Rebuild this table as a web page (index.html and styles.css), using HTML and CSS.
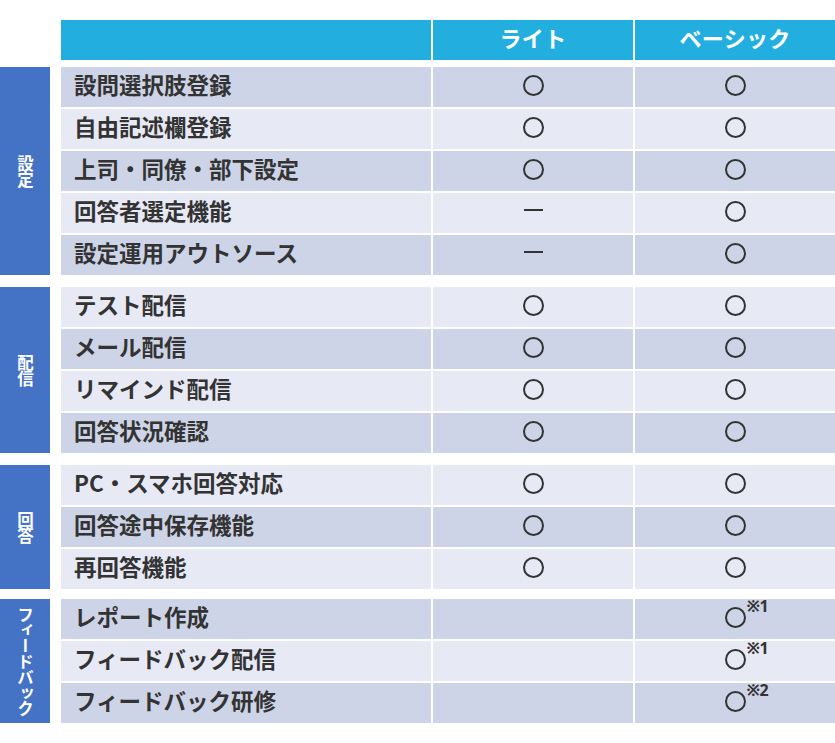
FILE: index.html
```html
<!DOCTYPE html>
<html lang="ja">
<head>
<meta charset="utf-8">
<link rel="stylesheet" href="styles.css">
</head>
<body>
<div class="table">
  <div class="head">
    <div class="head-spacer"></div>
    <div class="head-cells">
      <div class="hcell"></div>
      <div class="hcell">ライト</div>
      <div class="hcell">ベーシック</div>
    </div>
  </div>

  <div class="group">
    <div class="cat"><span>設定</span></div>
    <div class="rows">
      <div class="row dark"><div class="feat">設問選択肢登録</div><div class="val"><i class="o"></i></div><div class="val"><i class="o"></i></div></div>
      <div class="row light"><div class="feat">自由記述欄登録</div><div class="val"><i class="o"></i></div><div class="val"><i class="o"></i></div></div>
      <div class="row dark"><div class="feat">上司・同僚・部下設定</div><div class="val"><i class="o"></i></div><div class="val"><i class="o"></i></div></div>
      <div class="row light"><div class="feat">回答者選定機能</div><div class="val"><i class="dash"></i></div><div class="val"><i class="o"></i></div></div>
      <div class="row dark"><div class="feat">設定運用アウトソース</div><div class="val"><i class="dash"></i></div><div class="val"><i class="o"></i></div></div>
    </div>
  </div>

  <div class="group">
    <div class="cat"><span>配信</span></div>
    <div class="rows">
      <div class="row light"><div class="feat">テスト配信</div><div class="val"><i class="o"></i></div><div class="val"><i class="o"></i></div></div>
      <div class="row dark"><div class="feat">メール配信</div><div class="val"><i class="o"></i></div><div class="val"><i class="o"></i></div></div>
      <div class="row light"><div class="feat">リマインド配信</div><div class="val"><i class="o"></i></div><div class="val"><i class="o"></i></div></div>
      <div class="row dark"><div class="feat">回答状況確認</div><div class="val"><i class="o"></i></div><div class="val"><i class="o"></i></div></div>
    </div>
  </div>

  <div class="group">
    <div class="cat"><span>回答</span></div>
    <div class="rows">
      <div class="row light"><div class="feat">PC・スマホ回答対応</div><div class="val"><i class="o"></i></div><div class="val"><i class="o"></i></div></div>
      <div class="row dark"><div class="feat">回答途中保存機能</div><div class="val"><i class="o"></i></div><div class="val"><i class="o"></i></div></div>
      <div class="row light"><div class="feat">再回答機能</div><div class="val"><i class="o"></i></div><div class="val"><i class="o"></i></div></div>
    </div>
  </div>

  <div class="group group-last">
    <div class="cat cat-long"><span>フィードバック</span></div>
    <div class="rows">
      <div class="row dark"><div class="feat">レポート作成</div><div class="val"></div><div class="val"><i class="o"><b class="note">※1</b></i></div></div>
      <div class="row light"><div class="feat">フィードバック配信</div><div class="val"></div><div class="val"><i class="o"><b class="note">※1</b></i></div></div>
      <div class="row dark"><div class="feat">フィードバック研修</div><div class="val"></div><div class="val"><i class="o"><b class="note">※2</b></i></div></div>
    </div>
  </div>
</div>
</body>
</html>
```

FILE: styles.css
```css
* { box-sizing: border-box; }
html, body {
  margin: 0;
  padding: 0;
  background: #ffffff;
}
body {
  font-family: "Noto Sans CJK JP", "Noto Sans", sans-serif;
  color: #333333;
  width: 835px;
}
.table {
  padding-top: 20px;
  display: flex;
  flex-direction: column;
}
.head {
  display: flex;
  gap: 11px;
  height: 40px;
}
.head-spacer { width: 50px; }
.head-cells {
  display: grid;
  grid-template-columns: 370px 200px 200px;
  column-gap: 2px;
}
.hcell {
  background: #22aedf;
  color: #ffffff;
  font-weight: 700;
  font-size: 22px;
  display: flex;
  align-items: center;
  justify-content: center;
  padding-bottom: 7px;
  letter-spacing: 0.3px;
}
.group {
  display: flex;
  gap: 11px;
  margin-top: 7px;
}
.group + .group { margin-top: 12px; }
.group.group-last { margin-top: 10px; }
.cat {
  width: 50px;
  background: #4472c4;
  color: #ffffff;
  display: flex;
  align-items: center;
  justify-content: center;
}
.cat span {
  writing-mode: vertical-rl;
  text-orientation: upright;
  font-weight: 700;
  font-size: 16.5px;
  line-height: 17px;
  letter-spacing: 0;
}
.cat-long span {
  letter-spacing: -0.7px;
}
.rows {
  display: flex;
  flex-direction: column;
  gap: 2px;
}
.row {
  display: grid;
  grid-template-columns: 370px 200px 200px;
  column-gap: 2px;
  height: 40px;
}
.row.dark > div { background: #ced4e7; }
.row.light > div { background: #e7e9f5; }
.feat {
  display: flex;
  align-items: center;
  padding-left: 13px;
  padding-bottom: 7px;
  font-size: 22.5px;
  font-weight: 700;
  color: #333333;
  white-space: nowrap;
}
.val {
  display: flex;
  align-items: center;
  justify-content: center;
  padding-bottom: 4px;
}
.o {
  position: relative;
  display: block;
  width: 21px;
  height: 21px;
  border: 2px solid #333333;
  border-radius: 50%;
}
.dash {
  display: block;
  width: 19px;
  height: 2.5px;
  background: #333333;
  margin-bottom: 2px;
}
.note {
  position: absolute;
  left: 20px;
  top: -14px;
  font-family: "Noto Sans", "Noto Sans CJK JP", sans-serif;
  font-size: 16px;
  font-weight: 700;
  font-style: normal;
  color: #333333;
  white-space: nowrap;
  letter-spacing: -0.5px;
}
```
